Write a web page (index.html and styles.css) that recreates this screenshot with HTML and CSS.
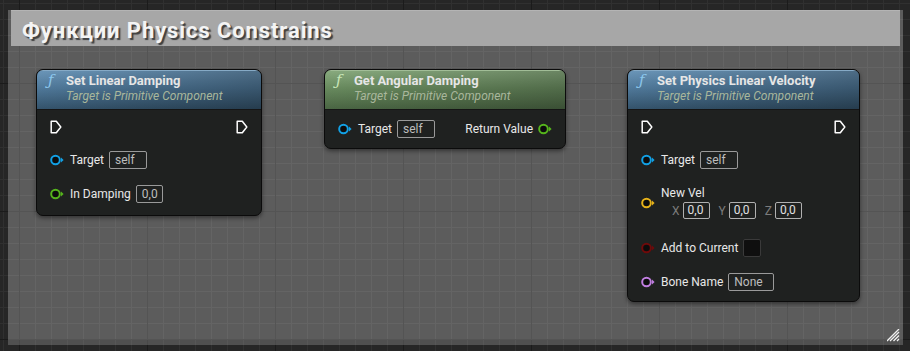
FILE: index.html
```html
<!DOCTYPE html>
<html>
<head>
<meta charset="utf-8">
<link rel="stylesheet" href="styles.css">
</head>
<body>
<div class="comment">
  <div class="comment-title">Функции Physics Constrains</div>

  <div class="node node-a">
    <div class="node-head head-blue">
      <span class="fn">ƒ</span>
      <span class="node-title">Set Linear Damping</span>
      <span class="node-sub">Target is Primitive Component</span>
    </div>
    <div class="node-body">
      <div class="row exec-row">
        <svg class="exec" width="12" height="14" viewBox="0 0 12 14"><path d="M1.2 1.2 H6.3 L10.8 7 L6.3 12.8 H1.2 Z" fill="none" stroke="#fff" stroke-width="1.5" stroke-linejoin="round"/></svg>
        <svg class="exec" width="12" height="14" viewBox="0 0 12 14"><path d="M1.2 1.2 H6.3 L10.8 7 L6.3 12.8 H1.2 Z" fill="none" stroke="#fff" stroke-width="1.5" stroke-linejoin="round"/></svg>
      </div>
      <div class="row pin-row gap9">
        <svg class="pin" width="14" height="12" viewBox="0 0 14 12"><circle cx="5.5" cy="6" r="4.3" fill="#0c0c0c" stroke="#12a0e4" stroke-width="2"/><path d="M11 3.4 L13.6 6 L11 8.6 Z" fill="#12a0e4"/></svg>
        <span class="label">Target</span>
        <span class="box w38">self</span>
      </div>
      <div class="row pin-row gap11">
        <svg class="pin" width="14" height="12" viewBox="0 0 14 12"><circle cx="5.5" cy="6" r="4.3" fill="#0c0c0c" stroke="#55b41c" stroke-width="2"/><path d="M11 3.4 L13.6 6 L11 8.6 Z" fill="#55b41c"/></svg>
        <span class="label">In Damping</span>
        <span class="box w27">0,0</span>
      </div>
    </div>
  </div>

  <div class="node node-b">
    <div class="node-head head-green">
      <span class="fn">ƒ</span>
      <span class="node-title">Get Angular Damping</span>
      <span class="node-sub">Target is Primitive Component</span>
    </div>
    <div class="node-body body-b">
      <div class="row pin-row split">
        <div class="side">
          <svg class="pin" width="14" height="12" viewBox="0 0 14 12"><circle cx="5.5" cy="6" r="4.3" fill="#0c0c0c" stroke="#12a0e4" stroke-width="2"/><path d="M11 3.4 L13.6 6 L11 8.6 Z" fill="#12a0e4"/></svg>
          <span class="label">Target</span>
          <span class="box w38">self</span>
        </div>
        <div class="side out">
          <span class="label">Return Value</span>
          <svg class="pin" width="14" height="12" viewBox="0 0 14 12"><circle cx="5.5" cy="6" r="4.3" fill="#0c0c0c" stroke="#55b41c" stroke-width="2"/><path d="M11 3.4 L13.6 6 L11 8.6 Z" fill="#55b41c"/></svg>
        </div>
      </div>
    </div>
  </div>

  <div class="node node-c">
    <div class="node-head head-blue">
      <span class="fn">ƒ</span>
      <span class="node-title">Set Physics Linear Velocity</span>
      <span class="node-sub">Target is Primitive Component</span>
    </div>
    <div class="node-body">
      <div class="row exec-row">
        <svg class="exec" width="12" height="14" viewBox="0 0 12 14"><path d="M1.2 1.2 H6.3 L10.8 7 L6.3 12.8 H1.2 Z" fill="none" stroke="#fff" stroke-width="1.5" stroke-linejoin="round"/></svg>
        <svg class="exec" width="12" height="14" viewBox="0 0 12 14"><path d="M1.2 1.2 H6.3 L10.8 7 L6.3 12.8 H1.2 Z" fill="none" stroke="#fff" stroke-width="1.5" stroke-linejoin="round"/></svg>
      </div>
      <div class="row pin-row gap9">
        <svg class="pin" width="14" height="12" viewBox="0 0 14 12"><circle cx="5.5" cy="6" r="4.3" fill="#0c0c0c" stroke="#12a0e4" stroke-width="2"/><path d="M11 3.4 L13.6 6 L11 8.6 Z" fill="#12a0e4"/></svg>
        <span class="label">Target</span>
        <span class="box w38">self</span>
      </div>
      <div class="vec-row">
        <svg class="pin" width="14" height="12" viewBox="0 0 14 12"><circle cx="5.5" cy="6" r="4.3" fill="#0c0c0c" stroke="#e6b21a" stroke-width="2"/><path d="M11 3.4 L13.6 6 L11 8.6 Z" fill="#e6b21a"/></svg>
        <div class="vec-main">
          <span class="label vec-label">New Vel</span>
          <div class="xyz">
            <span class="axis">X</span><span class="box vbox">0,0</span>
            <span class="axis">Y</span><span class="box vbox">0,0</span>
            <span class="axis">Z</span><span class="box vbox">0,0</span>
          </div>
        </div>
      </div>
      <div class="row pin-row gap15">
        <svg class="pin" width="14" height="12" viewBox="0 0 14 12"><circle cx="5.5" cy="6" r="4.3" fill="#0c0c0c" stroke="#6e0a0a" stroke-width="2"/><path d="M11 3.4 L13.6 6 L11 8.6 Z" fill="#6e0a0a"/></svg>
        <span class="label">Add to Current</span>
        <span class="check"></span>
      </div>
      <div class="row pin-row gap10">
        <svg class="pin" width="14" height="12" viewBox="0 0 14 12"><circle cx="5.5" cy="6" r="4.3" fill="#0c0c0c" stroke="#c07ee0" stroke-width="2"/><path d="M11 3.4 L13.6 6 L11 8.6 Z" fill="#c07ee0"/></svg>
        <span class="label">Bone Name</span>
        <span class="box w46">None</span>
      </div>
    </div>
  </div>

  <svg class="grip" width="13" height="13" viewBox="0 0 13 13">
    <path d="M12 3 L3 12 M12 6.5 L6.5 12 M12 10 L10 12 M12 0 L0 12" stroke="#f2f2f2" stroke-width="1.3"/>
  </svg>
</div>
</body>
</html>
```

FILE: styles.css
```css
* { box-sizing: border-box; }

html, body {
  margin: 0;
  width: 910px;
  height: 351px;
  overflow: hidden;
}

body {
  padding: 8px 0 0 8px;
  font-family: Roboto, "Noto Sans", "Liberation Sans", sans-serif;
  background-color: #262626;
  background-image:
    linear-gradient(to right, #1b1b1b 1px, transparent 1px),
    linear-gradient(to bottom, #1b1b1b 1px, transparent 1px),
    linear-gradient(to right, #303030 1px, transparent 1px),
    linear-gradient(to bottom, #303030 1px, transparent 1px);
  background-size: 128px 128px, 128px 128px, 16px 16px, 16px 16px;
  background-position: 19px 0, 0 83px, 3px 0, 0 3px;
}

.comment {
  position: relative;
  width: 895px;
  height: 335px;
  background: rgba(255, 255, 255, 0.25);
  box-shadow: inset 0 -5px 0 rgba(0, 0, 0, 0.12);
}

.comment-title {
  margin: 2px 3px 0 3px;
  height: 36px;
  padding: 3px 0 0 11px;
  line-height: 33px;
  background: #a7a7a7;
  border-top: 1px solid #b4b4b4;
  color: #f4f4f4;
  font-weight: 700;
  font-size: 22px;
  letter-spacing: 0.9px;
  text-shadow: 2px 2px 1px rgba(30, 30, 30, 0.75);
  white-space: nowrap;
}

.node {
  position: absolute;
  top: 59px;
  background: #1f2120;
  border: 1px solid #0b0b0b;
  border-radius: 7px;
  box-shadow: 0 2px 4px rgba(0, 0, 0, 0.45);
  overflow: hidden;
}

.node-a { left: 28px; width: 226px; height: 147px; }
.node-b { left: 316px; width: 242px; height: 80px; }
.node-c { left: 619px; width: 233px; height: 233px; }

.node-head {
  height: 40px;
  display: grid;
  grid-template-columns: 19px 1fr;
  grid-template-rows: 17px 15px;
  padding: 1px 0 0 10px;
  border-bottom: 1px solid #151515;
}

.head-blue {
  background:
    linear-gradient(to right, rgba(0,0,0,0) 0%, rgba(0,0,0,0.28) 100%),
    linear-gradient(to bottom, #6a95b8 0%, #4f7899 45%, #34536b 100%);
  border-top: 1px solid #86aac6;
}

.head-green {
  background:
    linear-gradient(to right, rgba(0,0,0,0) 0%, rgba(0,0,0,0.22) 100%),
    linear-gradient(to bottom, #88aa7e 0%, #688a5e 45%, #4a6543 100%);
  border-top: 1px solid #a1bd97;
}

.fn {
  grid-row: 1;
  grid-column: 1;
  font-family: "DejaVu Serif", serif;
  font-style: italic;
  font-size: 15px;
  line-height: 17px;
  color: #8cc6ec;
  padding-left: 1px;
}

.head-green .fn { color: #c8e6b8; }

.node-title {
  grid-row: 1;
  grid-column: 2;
  font-weight: 700;
  font-size: 13px;
  line-height: 17px;
  color: #e6e6e6;
  white-space: nowrap;
}

.node-sub {
  grid-row: 2;
  grid-column: 2;
  font-style: italic;
  font-size: 12px;
  line-height: 15px;
  color: #a9b79c;
  white-space: nowrap;
}

.node-body {
  padding: 5px 13px 0 13px;
}

.body-b { padding-top: 7px; }

.row {
  height: 24px;
  display: flex;
  align-items: center;
}

.exec-row { justify-content: space-between; }

.gap9 { margin-top: 9px; }
.gap10 { margin-top: 10px; }
.gap11 { margin-top: 10px; }
.gap15 { margin-top: 17px; }

.pin { flex: none; }
.pin-row .pin, .vec-row .pin { margin-right: 6px; }

.label {
  font-size: 12px;
  color: #e8e8e8;
  white-space: nowrap;
}

.box {
  margin-left: 5px;
  height: 18px;
  line-height: 16px;
  padding: 0 0 0 5px;
  border: 1px solid #9a9a9a;
  border-radius: 2px;
  font-size: 12px;
  color: #bdbdbd;
}

.w38 { width: 38px; }
.w27 { width: 27px; }
.w46 { width: 46px; }

.split { justify-content: space-between; }
.side { display: flex; align-items: center; }
.side.out .label { margin-right: 5px; }
.side.out .pin { margin-right: 0; }

.vec-row {
  display: flex;
  align-items: center;
  margin-top: 14px;
}

.vec-main { display: flex; flex-direction: column; }

.vec-label { line-height: 14px; }

.xyz {
  display: flex;
  align-items: center;
  margin-top: 2px;
  padding-left: 11px;
}

.axis {
  font-size: 12px;
  color: #7c7c7c;
  margin-right: 1px;
}

.vbox {
  margin-left: 2px;
  margin-right: 9px;
  width: 27px;
  height: 17px;
  line-height: 15px;
  padding-left: 4px;
  color: #e0e0e0;
  border-color: #b0b0b0;
}

.check {
  margin-left: 5px;
  width: 18px;
  height: 18px;
  background: #0f0f0f;
  border: 1px solid #3a3a3a;
  border-radius: 2px;
}

.grip {
  position: absolute;
  right: 3px;
  bottom: 3px;
}
```
